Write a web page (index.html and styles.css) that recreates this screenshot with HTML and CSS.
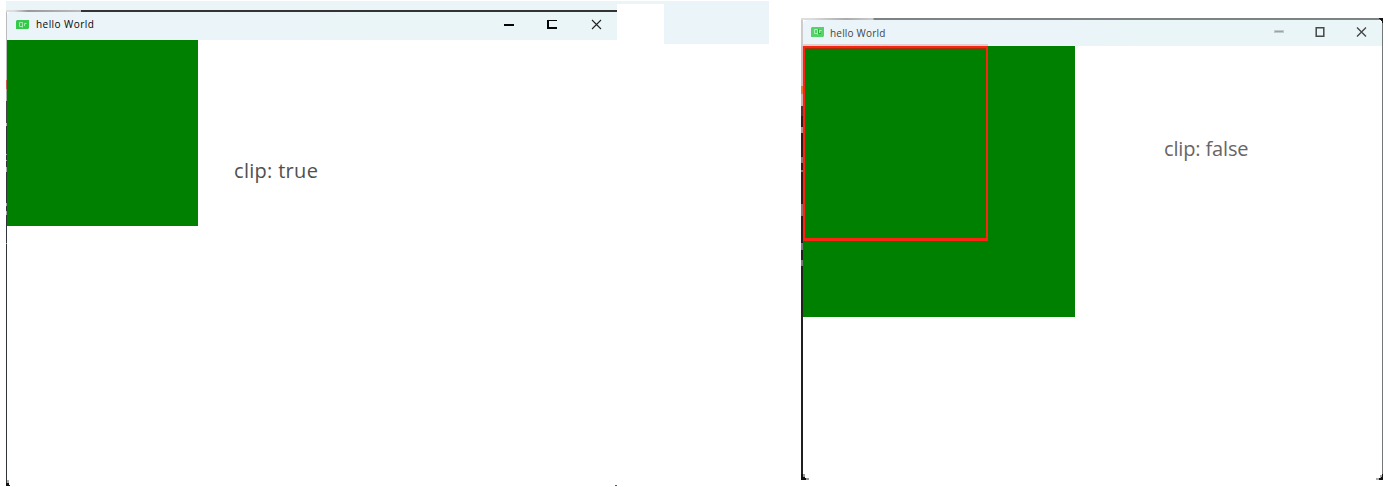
FILE: index.html
```html
<!DOCTYPE html>
<html lang="en">
<head>
<meta charset="utf-8">
<title>hello World</title>
<link rel="stylesheet" href="styles.css">
</head>
<body>
<main class="comparison">
  <section class="backdrop">
    <div class="strip"></div>
    <div class="row">
      <article class="window window-clipped">
        <div class="edge-top"></div>
        <div class="frame">
          <div class="edge-left"></div>
          <div class="content">
            <header class="titlebar">
              <svg class="logo" viewBox="0 0 13 9"><path fill="#35ca4b" d="M1 0H13V8L12 9H0V1Z"/><path fill="none" stroke="#a5e8ae" d="M6.5 6.5H3.5V2.5H6.5V7.5M8.5 6V3.5H10.5"/></svg>
              <span class="title">hello World</span>
              <svg class="controls" viewBox="0 0 100 12" shape-rendering="crispEdges"><path fill="#050505" d="M0 5H10V7H0ZM43 1H53V2H45V8H53V10H43Z"/><path shape-rendering="auto" fill="none" stroke="#222" stroke-width="1.1" d="M88 1L97 10M97 1L88 10"/></svg>
            </header>
            <div class="body">
              <div class="green"></div>
              <p class="label">clip: true</p>
            </div>
          </div>
        </div>
        <svg class="corner corner-bl" viewBox="0 0 4 6"><path fill="#aaa" d="M1 0H3V3H1Z"/><path fill="#111" d="M0 3H3V5H4V6H0Z"/></svg>
        <span class="corner-mark"></span>
      </article>
      <div class="patch"></div>
    </div>
  </section>
  <article class="window window-open">
    <div class="edge-top"></div>
    <div class="frame">
      <div class="edge-left"></div>
      <div class="content">
        <header class="titlebar">
          <svg class="logo" viewBox="0 0 13 10"><path fill="#55d268" d="M1 0H13V9L12 10H0V1Z"/><path fill="none" stroke="#b3ecba" d="M6.5 6.5H3.5V2.5H6.5V7.5M8.5 6V3.5H10.5"/><path fill="none" stroke="#24b33b" d="M7.5 2V6.5H10"/></svg>
          <span class="title">hello World</span>
          <svg class="controls" viewBox="0 0 100 12"><path fill="#c3cacb" d="M0 4H10V7H0Z"/><path fill="#9da3a4" d="M1 5H9V6H1Z"/><path fill="none" stroke="#454849" stroke-width="1.5" d="M42.2 1.7H49.8V10.3H42.2Z"/><path fill="none" stroke="#444" stroke-width="1.3" d="M83 1.5L92 10.5M92 1.5L83 10.5"/></svg>
        </header>
        <div class="body">
          <div class="green"><div class="outline"></div></div>
          <p class="label">clip: false</p>
        </div>
      </div>
      <div class="edge-right"></div>
    </div>
    <svg class="corner corner-bl" viewBox="0 0 8 6"><path fill="#999" d="M2 0H4V3H2ZM5 4H8V6H5Z"/><path fill="#111" d="M0 0H2V3H4V4H5V6H0Z"/></svg>
    <svg class="corner corner-br" viewBox="0 0 7 6"><path fill="#aaa" d="M4 1H6V4H3V6H0V4H4Z"/><path fill="#111" d="M6 0H7V6H3V4H5V3H6Z"/></svg>
    <svg class="corner corner-tr" viewBox="0 0 6 6"><path fill="#111" d="M2 0H6V5H5V3H4V2H3V1H2Z"/></svg>
  </article>
</main>
</body>
</html>
```
FILE: styles.css
```css
body {
  margin: 0;
  background: #fff;
  font-family: "Open Sans", "Noto Sans", sans-serif;
}
.comparison {
  box-sizing: border-box;
  height: 487px;
  display: flex;
  align-items: flex-start;
  gap: 32px;
  padding: 1px 5px 0 6px;
  overflow: hidden;
}
.backdrop { width: 763px; }
.strip { height: 3px; background: #ebf5f8; }
.row { display: flex; justify-content: space-between; align-items: flex-start; }
.patch { width: 105px; height: 40px; background: #ebf4f9; }
.window { position: relative; display: flex; flex-direction: column; }
.frame { display: flex; flex: 1; }
.content { flex: 1; display: flex; flex-direction: column; background: #fff; }
.titlebar {
  display: flex;
  align-items: center;
  background: linear-gradient(90deg, #ebf4f9, #eaf5f8 60%);
}
.title { white-space: nowrap; }
.logo { display: block; flex: none; }
.controls { width: 100px; height: 12px; margin-left: auto; flex: none; }
.body { display: flex; align-items: flex-start; flex: 1; }
.green { background: #008000; flex: none; }
.label { margin: 0; line-height: 30px; white-space: nowrap; }
.corner { position: absolute; display: block; }

.window-clipped {
  box-sizing: border-box;
  width: 611px;
  height: 482px;
  border-top: 6px solid #ebf5f8;
}
.window-clipped .edge-top {
  height: 2px;
  background: linear-gradient(90deg, #ddd 0 8px, #999 22px, #bbb 75px, #333 75px);
}
.window-clipped .edge-left {
  width: 1px;
  background: linear-gradient(#bbb 0 68px, #c75b5b 68px 77px, #aaa 77px 89px, #444 89px 111px, #bbb 111px 114px, #303338 114px 142px, #aaa 142px 143px, #303338 143px 148px, #aaa 148px 149px, #303338 149px 155px, #aaa 155px 160px, #303338 160px 191px, #aaa 191px 194px, #303338 194px 199px, #aaa 199px 203px, #303338 203px 231px, #aaa 231px 232px, #303338 232px);
}
.window-clipped .titlebar {
  height: 28px;
  padding-right: 13px;
  border-radius: 4px 0 0 0;
}
.window-clipped .logo { width: 13px; height: 9px; margin: 0 7px 4px 9px; }
.window-clipped .title { font-size: 10px; line-height: 14px; color: #050505; letter-spacing: .45px; margin-bottom: 4px; }
.window-clipped .controls { margin-bottom: 3px; }
.window-clipped .green { width: 191px; height: 186px; }
.window-clipped .label { font-size: 20px; color: #505050; letter-spacing: .3px; margin: 116px 0 0 36px; }
.window-clipped .corner-bl { left: 0; bottom: 0; width: 4px; height: 6px; }
.corner-mark { position: absolute; right: 0; bottom: 0; width: 2px; height: 1px; background: #555; }

.window-open { width: 582px; height: 462px; margin-top: 17px; }
.window-open .edge-top {
  height: 2px;
  background: linear-gradient(90deg, #ddd 0 10px, #aaa 45px, #ccc 72px, #7d8285 73px);
}
.window-open .edge-left {
  width: 2px;
  background: linear-gradient(#ccc 0 26px, #e0b5b5 26px 66px, #e07840 66px 74px, #d9aaaa 74px 86px, #632c2c 86px 96px, #351515 96px 107px, #b88 107px 113px, #351515 113px 137px, #966 137px 143px, #351515 143px 150px, #966 150px 152px, #351515 152px 184px, #966 184px 196px, #351515 196px 220px, #202020 220px 223px, #777 223px 230px, #202020 230px 240px, #777 240px 246px, #202020 246px);
}
.window-open .edge-right { width: 1px; background: #747779; }
.window-open .titlebar { height: 26px; padding-right: 8px; border-radius: 5px 5px 0 0; }
.window-open .logo { width: 13px; height: 10px; margin: 0 6px 2px 8px; }
.window-open .title { font-size: 10px; line-height: 14px; color: #404546; letter-spacing: .2px; margin-bottom: 1px; }
.window-open .controls { margin-bottom: 2px; }
.window-open .green { width: 272px; height: 271px; }
.outline { box-sizing: border-box; width: 185px; height: 195px; border: 2px solid #fa2410; border-bottom-width: 3px; box-shadow: 0 -2px #e2cfd1, inset 0 1px #a33008; }
.window-open .label { font-size: 20px; color: #666; letter-spacing: -.15px; margin: 88px 0 0 89px; }
.window-open .corner-bl { left: 0; bottom: 0; width: 8px; height: 6px; }
.window-open .corner-br { right: 0; bottom: 0; width: 7px; height: 6px; }
.window-open .corner-tr { right: 0; top: 0; width: 6px; height: 6px; }
```
